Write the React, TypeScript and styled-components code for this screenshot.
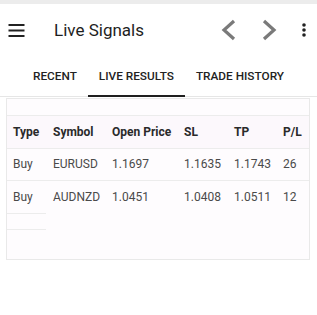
import React from "react";
import styled, { createGlobalStyle } from "styled-components";

const Global = createGlobalStyle`
  html, body { margin: 0; padding: 0; background: #ffffff; }
  body { font-family: Roboto, "Noto Sans", Arial, sans-serif; width: 317px; height: 315px; overflow: hidden; }
`;

const Page = styled.div`
  width: 317px;
  height: 315px;
  display: flex;
  flex-direction: column;
  background: #fff;
`;

const StatusStrip = styled.div`
  height: 4px;
  background: #ececec;
`;

const Toolbar = styled.div`
  height: 52px;
  display: flex;
  align-items: center;
  padding: 0 6px 0 8px;
`;

const IconButton = styled.div<{ $w: number; $ml?: number }>`
  width: ${(p) => p.$w}px;
  margin-left: ${(p) => p.$ml ?? 0}px;
  display: flex;
  align-items: center;
  justify-content: center;
`;

const Title = styled.div`
  margin-left: 29px;
  font-size: 17px;
  color: #1e1e1e;
  font-weight: 400;
  flex: 1;
`;

const Tabs = styled.div`
  height: 40px;
  display: flex;
  padding-left: 22px;
  border-bottom: 1px solid #e6e6e6;
`;

const Tab = styled.div<{ $active?: boolean }>`
  padding: 0 11px;
  display: flex;
  align-items: center;
  font-size: 11.8px;
  font-weight: 500;
  color: #222;
  margin-bottom: -1px;
  border-bottom: 2px solid ${(p) => (p.$active ? "#1f1f1f" : "transparent")};
`;

const Card = styled.div`
  margin: 1px 7px 0 6px;
  height: 162px;
  border: 1px solid #e9e9e9;
  background: #fefcfe;
  padding-top: 16px;
  box-sizing: border-box;
`;

const Row = styled.div<{ $head?: boolean }>`
  display: grid;
  grid-template-columns: 40px 59px 72px 50px 49px 1fr;
  height: 32.5px;
  box-sizing: border-box;
  align-items: center;
  padding-left: 6px;
  border-top: 1px solid #ececec;
  font-size: 12px;
  font-weight: ${(p) => (p.$head ? 700 : 400)};
  color: ${(p) => (p.$head ? "#2a2a2a" : "#4a4a4a")};
  background: ${(p) => (p.$head ? "#fcf8fc" : "transparent")};
`;

const Stub = styled.div`
  width: 39px;
  height: 15px;
  border-top: 1px solid #ececec;
`;

const rows = [
  ["Buy", "EURUSD", "1.1697", "1.1635", "1.1743", "26"],
  ["Buy", "AUDNZD", "1.0451", "1.0408", "1.0511", "12"],
];

export default function App() {
  return (
    <Page>
      <Global />
      <StatusStrip />
      <Toolbar>
        <IconButton $w={17}>
          <svg width="17" height="13" viewBox="0 0 17 13">
            <rect x="0.5" y="0" width="16" height="2" fill="#222" />
            <rect x="0.5" y="5.5" width="16" height="2" fill="#222" />
            <rect x="0.5" y="11" width="16" height="2" fill="#222" />
          </svg>
        </IconButton>
        <Title>Live Signals</Title>
        <IconButton $w={20}>
          <svg width="16" height="22" viewBox="0 0 16 22">
            <polyline points="13,2 3,11 13,20" fill="none" stroke="#7a7a7a" strokeWidth="3.2" strokeLinejoin="miter" />
          </svg>
        </IconButton>
        <IconButton $w={20} $ml={20}>
          <svg width="16" height="22" viewBox="0 0 16 22">
            <polyline points="3,2 13,11 3,20" fill="none" stroke="#7a7a7a" strokeWidth="3.2" strokeLinejoin="miter" />
          </svg>
        </IconButton>
        <IconButton $w={14} $ml={18}>
          <svg width="4" height="14" viewBox="0 0 4 14">
            <circle cx="2" cy="2" r="1.8" fill="#222" />
            <circle cx="2" cy="7" r="1.8" fill="#222" />
            <circle cx="2" cy="12" r="1.8" fill="#222" />
          </svg>
        </IconButton>
      </Toolbar>
      <Tabs>
        <Tab>RECENT</Tab>
        <Tab $active>LIVE RESULTS</Tab>
        <Tab>TRADE HISTORY</Tab>
      </Tabs>
      <Card>
        <Row $head>
          <div>Type</div>
          <div>Symbol</div>
          <div>Open Price</div>
          <div>SL</div>
          <div>TP</div>
          <div>P/L</div>
        </Row>
        {rows.map((r, i) => (
          <Row key={i}>
            {r.map((c, j) => (
              <div key={j}>{c}</div>
            ))}
          </Row>
        ))}
        <Stub />
        <Stub />
      </Card>
    </Page>
  );
}
